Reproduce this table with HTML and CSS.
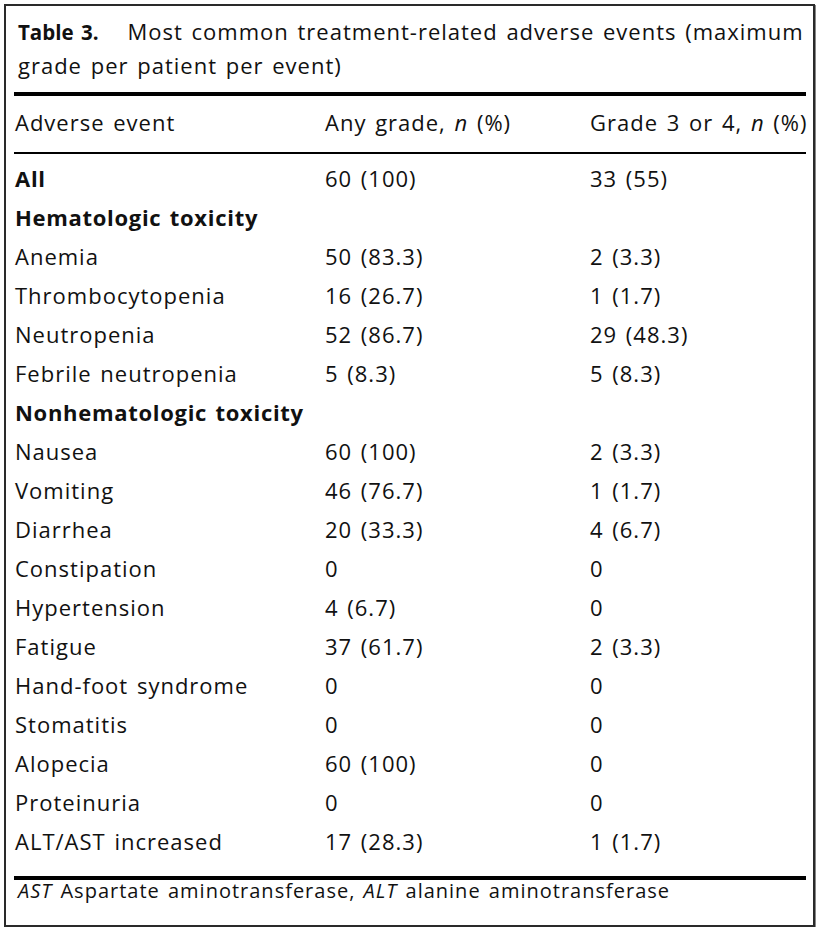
FILE: index.html
```html
<!DOCTYPE html>
<html>
<head>
<meta charset="utf-8">
<link rel="stylesheet" href="styles.css">
</head>
<body>
<div class="frame">
  <div class="caption"><span class="label">Table 3.</span>Most common treatment-related adverse events (maximum grade per patient per event)</div>
  <div class="rule thick"></div>
  <div class="row head">
    <div>Adverse event</div>
    <div>Any grade, <i>n</i> (%)</div>
    <div>Grade 3 or 4, <i>n</i> (%)</div>
  </div>
  <div class="rule thin"></div>
  <div class="body">
    <div class="row bold"><div>All</div><div>60 (100)</div><div>33 (55)</div></div>
    <div class="row bold"><div>Hematologic toxicity</div><div></div><div></div></div>
    <div class="row"><div>Anemia</div><div>50 (83.3)</div><div>2 (3.3)</div></div>
    <div class="row"><div>Thrombocytopenia</div><div>16 (26.7)</div><div>1 (1.7)</div></div>
    <div class="row"><div>Neutropenia</div><div>52 (86.7)</div><div>29 (48.3)</div></div>
    <div class="row"><div>Febrile neutropenia</div><div>5 (8.3)</div><div>5 (8.3)</div></div>
    <div class="row bold"><div>Nonhematologic toxicity</div><div></div><div></div></div>
    <div class="row"><div>Nausea</div><div>60 (100)</div><div>2 (3.3)</div></div>
    <div class="row"><div>Vomiting</div><div>46 (76.7)</div><div>1 (1.7)</div></div>
    <div class="row"><div>Diarrhea</div><div>20 (33.3)</div><div>4 (6.7)</div></div>
    <div class="row"><div>Constipation</div><div>0</div><div>0</div></div>
    <div class="row"><div>Hypertension</div><div>4 (6.7)</div><div>0</div></div>
    <div class="row"><div>Fatigue</div><div>37 (61.7)</div><div>2 (3.3)</div></div>
    <div class="row"><div>Hand-foot syndrome</div><div>0</div><div>0</div></div>
    <div class="row"><div>Stomatitis</div><div>0</div><div>0</div></div>
    <div class="row"><div>Alopecia</div><div>60 (100)</div><div>0</div></div>
    <div class="row"><div>Proteinuria</div><div>0</div><div>0</div></div>
    <div class="row"><div>ALT/AST increased</div><div>17 (28.3)</div><div>1 (1.7)</div></div>
  </div>
  <div class="rule thick"></div>
  <div class="foot"><i>AST</i> Aspartate aminotransferase, <i>ALT</i> alanine aminotransferase</div>
</div>
</body>
</html>
```
FILE: styles.css
```css
html, body {
  margin: 0;
  padding: 0;
  background: #fff;
}
body {
  font-family: "Open Sans", "Noto Sans", sans-serif;
  color: #111;
  font-size: 22px;
  letter-spacing: 1px;
  word-spacing: 2px;
}
.frame {
  margin: 4px 0 0 4px;
  width: 792px;
  height: 919px;
  border: 2px solid #2a2a2a;
  box-shadow: 1px 1px 0 #888;
  padding: 0 7px 0 8px;
  box-sizing: content-box;
  overflow: hidden;
}
.caption {
  padding: 9px 0 0 4px;
  height: 86px;
  box-sizing: border-box;
  line-height: 33px;
}
.label {
  font-weight: 700;
  letter-spacing: 0;
  font-size: 20.5px;
  margin-right: 29px;
}
.rule.thick {
  height: 4px;
  background: #000;
}
.rule.thin {
  height: 2px;
  background: #000;
}
.row {
  display: grid;
  grid-template-columns: 310px 265px 1fr;
  padding-left: 1px;
  height: 39px;
  align-items: center;
  white-space: nowrap;
}
.row.head {
  height: 56px;
  padding-bottom: 4px;
  box-sizing: border-box;
}
.body {
  padding-top: 4px;
  padding-bottom: 16px;
}
.bold > div:first-child {
  font-weight: 700;
  letter-spacing: 0.7px;
}
.foot {
  padding: 1px 0 0 4px;
  font-size: 20px;
  line-height: 20px;
}
```
